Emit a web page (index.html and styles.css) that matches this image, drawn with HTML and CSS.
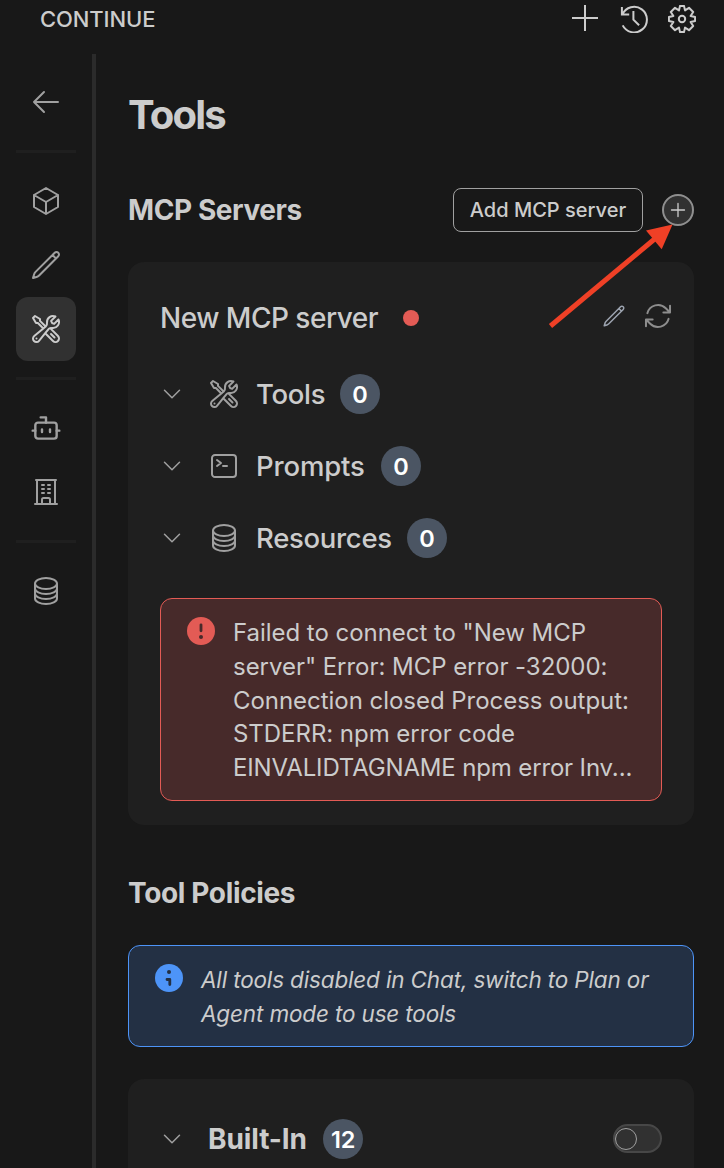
FILE: index.html
```html
<!DOCTYPE html>
<html lang="en">
<head>
<meta charset="utf-8">
<title>Continue – Tools</title>
<link rel="stylesheet" href="styles.css">
</head>
<body>
<svg class="defs" width="0" height="0">
  <symbol id="tools" viewBox="0 0 24 24"><path d="M11.42 15.17 17.25 21A2.652 2.652 0 0 0 21 17.25l-5.877-5.877M11.42 15.17l2.496-3.03c.317-.384.74-.626 1.208-.766M11.42 15.17l-4.655 5.653a2.548 2.548 0 1 1-3.586-3.586l6.837-5.63m5.108-.233c.55-.164 1.163-.188 1.743-.14a4.5 4.5 0 0 0 4.486-6.336l-3.276 3.277a3.004 3.004 0 0 1-2.25-2.25l3.276-3.276a4.5 4.5 0 0 0-6.336 4.486c.091 1.076-.071 2.264-.904 2.95l-.102.085m-1.745 1.437L5.909 7.5H4.5L2.25 3.75l1.5-1.5L7.5 4.5v1.409l4.26 4.26m-1.745 1.437 1.745-1.437m6.615 8.206L15.75 15.75M4.867 19.125h.008v.008h-.008v-.008Z"/></symbol>
  <symbol id="pencil" viewBox="0 0 24 24"><path d="m16.862 4.487 1.687-1.688a1.875 1.875 0 1 1 2.652 2.652L6.832 19.82a4.5 4.5 0 0 1-1.897 1.13l-2.685.8.8-2.685a4.5 4.5 0 0 1 1.13-1.897L16.863 4.487Zm0 0L19.5 7.125"/></symbol>
  <symbol id="stack" viewBox="0 0 24 24"><path d="M20.25 6.375c0 2.278-3.694 4.125-8.25 4.125S3.75 8.653 3.75 6.375m16.5 0c0-2.278-3.694-4.125-8.25-4.125S3.75 4.097 3.75 6.375m16.5 0v11.25c0 2.278-3.694 4.125-8.25 4.125s-8.25-1.847-8.25-4.125V6.375m16.5 3.75c0 2.278-3.694 4.125-8.25 4.125s-8.25-1.847-8.25-4.125m16.5 3.75C20.25 16.153 16.556 18 12 18s-8.25-1.847-8.25-4.125"/></symbol>
  <symbol id="chevron" viewBox="0 0 24 24"><path d="m19.5 8.25-7.5 7.5-7.5-7.5"/></symbol>
</svg>
<header class="topbar">
  <span class="brand">CONTINUE</span>
  <div class="actions">
    <svg class="act" viewBox="0 0 28 28"><path d="M13 0v26M0 13h26"/></svg>
    <svg class="act" viewBox="0 0 28 28"><path d="M2.4 9.4A12.8 12.8 0 1 1 2.7 20.4M1.9 2v7.6h7.3M13.4 6v8.6l5.7 5.7"/></svg>
    <svg class="act gear" viewBox="-14 -14 28 28"><path d="M-2-13.1H2L3-8.6 7-11.2 11.2-7 8.6-3 13.1-2V2L8.6 3 11.2 7 7 11.2 3 8.6 2 13.1H-2L-3 8.6-7 11.2-11.2 7-8.6 3-13.1 2V-2L-8.6-3-11.2-7-7-11.2-3-8.6Z"/><circle r="3.2"/></svg>
  </div>
</header>
<div class="layout">
  <nav class="side">
    <a class="nav"><svg viewBox="0 0 24 24"><path d="M10.5 19.5 3 12m0 0 7.5-7.5M3 12h18"/></svg></a>
    <div class="rule"></div>
    <a class="nav"><svg viewBox="0 0 24 24"><path d="m21 7.5-9-5.25L3 7.5m18 0-9 5.25m9-5.25v9l-9 5.25M3 7.5l9 5.25M3 7.5v9l9 5.25m0-9v9"/></svg></a>
    <a class="nav"><svg><use href="#pencil"/></svg></a>
    <a class="nav active"><svg><use href="#tools"/></svg></a>
    <div class="rule"></div>
    <a class="nav"><svg class="bot" viewBox="0 0 24 24"><path d="M12 8V4H8M2 14h2M20 14h2M15 13v2M9 13v2"/><rect x="4" y="8" width="16" height="12" rx="2"/></svg></a>
    <a class="nav"><svg viewBox="0 0 24 24"><path d="M3.75 21h16.5M4.5 3h15M5.25 3v18m13.5-18v18M9 6.75h1.5m-1.5 3h1.5m-1.5 3h1.5m3-6H15m-1.5 3H15m-1.5 3H15M9 21v-3.375c0-.621.504-1.125 1.125-1.125h3.75c.621 0 1.125.504 1.125 1.125V21"/></svg></a>
    <div class="rule"></div>
    <a class="nav"><svg><use href="#stack"/></svg></a>
  </nav>
  <main class="content">
    <h1>Tools</h1>
    <div class="section-head">
      <h2 class="servers-title">MCP Servers</h2>
      <button class="add">Add MCP server</button>
      <button class="plus"><svg viewBox="0 0 16 16"><path d="M8 1.5v13M1.5 8h13"/></svg></button>
    </div>
    <section class="card server">
      <div class="server-head">
        <h3>New MCP server</h3><i class="dot"></i>
        <svg class="edit"><use href="#pencil"/></svg>
        <svg class="refresh" viewBox="0 0 24 24"><path d="M16.023 9.348h4.992v-.001M2.985 19.644v-4.992m0 0h4.992m-4.993 0 3.181 3.183a8.25 8.25 0 0 0 13.803-3.7M4.031 9.865a8.25 8.25 0 0 1 13.803-3.7l3.181 3.182m0-4.991v4.99"/></svg>
      </div>
      <div class="row"><svg class="chev"><use href="#chevron"/></svg><svg class="kind"><use href="#tools"/></svg><span class="label l-tools">Tools</span><b class="badge">0</b></div>
      <div class="row"><svg class="chev"><use href="#chevron"/></svg><svg class="kind" viewBox="0 0 24 24"><path d="m6.75 7.5 3 2.25-3 2.25m4.5 0h3m-9 8.25h13.5A2.25 2.25 0 0 0 21 18V6a2.25 2.25 0 0 0-2.25-2.25H5.25A2.25 2.25 0 0 0 3 6v12a2.25 2.25 0 0 0 2.25 2.25Z"/></svg><span class="label l-prompts">Prompts</span><b class="badge">0</b></div>
      <div class="row"><svg class="chev"><use href="#chevron"/></svg><svg class="kind"><use href="#stack"/></svg><span class="label l-resources">Resources</span><b class="badge">0</b></div>
      <div class="notice error">
        <svg class="mark" viewBox="0 0 28 28"><circle cx="14" cy="14" r="14"/><path class="cut" d="M14 7.8v6"/><circle class="cutdot" cx="14" cy="20" r="2"/></svg>
        <p>Failed to connect to "New MCP<br>server" Error: MCP error -32000:<br>Connection closed Process output:<br>STDERR: npm error code<br><span class="last">EINVALIDTAGNAME npm error Inv...</span></p>
      </div>
    </section>
    <h2 class="policy-title">Tool Policies</h2>
    <div class="notice info">
      <svg class="mark" viewBox="0 0 28 28"><circle cx="14" cy="14" r="14"/><circle class="cutdot" cx="14" cy="8" r="2"/><path class="cut" d="M12 15.5h2.8v5"/></svg>
      <p>All tools disabled in Chat, switch to Plan or<br>Agent mode to use tools</p>
    </div>
    <section class="card builtin">
      <svg class="chev"><use href="#chevron"/></svg>
      <h3>Built-In</h3><b class="badge">12</b>
      <span class="toggle"><i></i></span>
    </section>
  </main>
</div>
<svg class="pointer" viewBox="0 0 724 1168"><path class="shaft" d="M550.5 326 657 237"/><path class="head" d="M672.5 224.5 646 230.5 661.7 249.3Z"/></svg>
</body>
</html>
```
FILE: styles.css
```css
* { box-sizing: border-box; }
body {
  margin: 0;
  height: 1168px;
  overflow: hidden;
  position: relative;
  background: #181818;
  color: #cccccc;
  font-family: Inter, "Liberation Sans", sans-serif;
}
h1, h2, h3, p { margin: 0; white-space: nowrap; }
svg { display: block; flex: none; fill: none; stroke: currentColor; stroke-width: 1.5; stroke-linecap: round; stroke-linejoin: round; }
.defs { position: absolute; }
button { font-family: inherit; color: inherit; padding: 0; }

.topbar { height: 54px; display: flex; justify-content: space-between; padding: 5px 28px 0 40px; }
.brand { font-size: 22px; line-height: 28px; font-weight: 450; letter-spacing: -0.1px; }
.actions { display: flex; gap: 20px; }
.act { width: 28px; height: 28px; stroke-width: 2; stroke-linecap: butt; stroke-linejoin: miter; }
.gear { stroke-linejoin: round; }

.layout { display: flex; height: 1114px; }
.side { width: 96px; flex: none; border-right: 4px solid #2b2b2b; padding: 16px 16px 0; color: #a0a0a0; }
.nav { display: flex; width: 60px; height: 64px; align-items: center; justify-content: center; border-radius: 12px; }
.nav svg { width: 32px; height: 32px; }
.nav.active { background: #313131; color: #cccccc; }
.nav .bot { stroke-width: 1.8; }
.rule { height: 3px; margin: 16px 0; background: #1f1f1f; }

.content { width: 566px; margin-left: 32px; }
h1 { padding-top: 37px; font-size: 40px; line-height: 48px; font-weight: 700; letter-spacing: -1.8px; }
h2 { font-size: 28px; line-height: 36px; font-weight: 650; letter-spacing: -0.35px; }
.section-head { display: flex; align-items: center; margin-top: 49px; height: 44px; }
.servers-title { flex: 1; letter-spacing: -0.42px; }
.add { width: 190px; height: 44px; border: 1px solid #a0a0a0; border-radius: 8px; background: none; font-size: 20px; font-weight: 450; letter-spacing: 0; white-space: nowrap; }
.plus { width: 32px; height: 32px; margin-left: 19px; border: 2px solid #8f8f8f; border-radius: 50%; background: #313131; display: flex; align-items: center; justify-content: center; }
.plus svg { width: 16px; height: 16px; stroke-width: 1.3; }

.card { background: #1f1f1f; border-radius: 16px; }
.server { margin-top: 30px; height: 563px; padding: 32px; }
.server-head { display: flex; align-items: center; height: 48px; margin-bottom: 16px; }
h3 { font-size: 28px; line-height: 36px; font-weight: 530; letter-spacing: -0.5px; }
.server-head h3 { width: 219px; }
.dot { width: 16px; height: 16px; border-radius: 50%; background: #e35b55; margin-left: 24px; }
.edit { width: 24px; height: 24px; margin-left: auto; margin-right: 16px; margin-bottom: 5px; color: #9ca3af; stroke-width: 1.5; }
.refresh { width: 32px; height: 32px; margin-right: -12px; margin-bottom: 5px; color: #8d8d8d; }
.row { display: flex; align-items: center; height: 72px; }
.chev { width: 24px; height: 24px; color: #a0a0a0; }
.kind { width: 32px; height: 32px; margin: 0 16px 0 24px; color: #a0a0a0; }
.label { font-size: 27.5px; line-height: 36px; font-weight: 450; letter-spacing: -0.3px; white-space: nowrap; }
.l-tools { width: 68px; }
.l-prompts { width: 109px; letter-spacing: -0.15px; }
.l-resources { width: 135px; }
.badge { width: 40px; height: 40px; margin-left: 16px; border-radius: 50%; background: #4b5563; color: #fff; font-size: 23.5px; line-height: 41px; font-weight: 600; letter-spacing: -0.2px; text-align: center; }

.notice { display: flex; border: 1px solid; border-radius: 12px; padding: 17px 0 0 26px; }
.mark { width: 28px; height: 28px; margin-top: 1px; stroke: none; fill: currentColor; }
.notice p { margin-left: 18px; font-size: 24px; line-height: 33.75px; font-weight: 430; letter-spacing: -0.04px; color: #cccccc; }
.notice .last { letter-spacing: -0.15px; }
.cut { fill: none; stroke: var(--bg); stroke-width: 2.8; }
.cutdot { fill: var(--bg); }
.error { --bg: #472a2a; height: 203px; margin-top: 24px; color: #e35b55; background: var(--bg); }
.info { --bg: #233044; height: 102px; margin-top: 34px; color: #4d94f8; background: var(--bg); }
.info p { font-style: italic; font-size: 22.5px; letter-spacing: -0.15px; }
.policy-title { margin-top: 50px; }

.builtin { margin-top: 32px; height: 89px; padding: 40px 32px 0; display: flex; align-items: flex-start; border-radius: 16px 16px 0 0; }
.builtin .chev { margin: 8px 24px 0 0; }
.builtin h3 { font-weight: 650; line-height: 40px; width: 99px; letter-spacing: -0.1px; }
.toggle { width: 49px; height: 29px; margin: 5px 0 0 auto; border: 2px solid #474747; border-radius: 15px; background: #313131; }
.toggle i { display: block; width: 22px; height: 22px; margin-top: 2px; border: 1px solid #a0a0a0; border-radius: 50%; }

.pointer { position: absolute; left: 0; top: 0; width: 724px; height: 1168px; pointer-events: none; color: #ef4026; }
.shaft { stroke-width: 5; stroke-linecap: butt; }
.head { fill: currentColor; stroke: none; }
```
